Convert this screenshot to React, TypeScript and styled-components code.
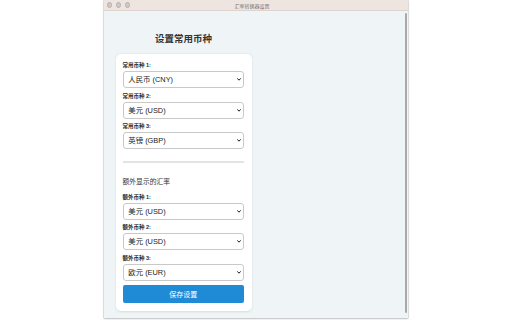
import React from "react";
import styled, { createGlobalStyle } from "styled-components";

const Global = createGlobalStyle`
  html, body { margin: 0; padding: 0; background: #ffffff; }
  body { font-family: "Liberation Sans", Arial, "Noto Sans CJK SC", sans-serif; }
  * { box-sizing: border-box; }
`;

const Page = styled.div`
  width: 512px;
  height: 320px;
  display: flex;
  padding-left: 104px;
  overflow: hidden;
`;

const Window = styled.div`
  width: 304px;
  height: 318px;
  display: flex;
  flex-direction: column;
  background: #eff4f7;
  box-shadow: 0 0 0 0.5px rgba(0, 0, 0, 0.18), 0 1px 2px rgba(0, 0, 0, 0.18);
`;

const TitleBar = styled.div`
  height: 11px;
  flex: none;
  display: flex;
  align-items: center;
  position: relative;
  padding-left: 2.5px;
  background: #eee4e0;
  border-bottom: 0.5px solid #ddd3cf;
`;

const Lights = styled.div`
  display: flex;
  gap: 3.5px;
`;

const Light = styled.span`
  width: 5.5px;
  height: 5.5px;
  border-radius: 50%;
  background: #cdc8c5;
  border: 0.5px solid #b9b3b0;
`;

const WindowTitle = styled.div`
  position: absolute;
  left: 0;
  right: 8px;
  top: 0;
  bottom: 0;
  display: flex;
  align-items: center;
  justify-content: center;
  font-size: 5px;
  color: #7a7472;
  pointer-events: none;
`;

const Content = styled.div`
  flex: 1;
  display: flex;
  min-height: 0;
`;

const Main = styled.div`
  flex: 1;
  padding: 22px 0 0 11.5px;
`;

const ScrollTrack = styled.div`
  width: 1.5px;
  margin: 2px 1.5px 5px 0;
  background: #a9a9a9;
  border-radius: 1px;
`;

const Column = styled.div`
  width: 136px;
  display: flex;
  flex-direction: column;
`;

const Heading = styled.h1`
  margin: 0;
  font-size: 9.5px;
  line-height: 12px;
  font-weight: 700;
  color: #333;
  text-align: center;
`;

const Card = styled.div`
  margin-top: 8.5px;
  background: #ffffff;
  border-radius: 5px;
  box-shadow: 0 0.5px 2.5px rgba(0, 0, 0, 0.1);
  padding: 8.5px 7.5px 8.5px 7px;
  display: flex;
  flex-direction: column;
`;

const Field = styled.div`
  display: flex;
  flex-direction: column;
  margin-bottom: 4.5px;
`;

const Label = styled.label`
  font-size: 5.5px;
  line-height: 6px;
  font-weight: 700;
  color: #2a2a2a;
  margin-bottom: 3px;
`;

const SelectWrap = styled.div`
  position: relative;
  height: 17px;
  font-size: 0;
  line-height: 0;
`;

const Select = styled.select`
  appearance: none;
  -webkit-appearance: none;
  display: block;
  width: 100%;
  height: 17px;
  margin: 0;
  padding: 0 10px 0 4.8px;
  font-family: "Liberation Sans", Arial, "Noto Sans CJK SC", sans-serif;
  font-size: 7.4px;
  line-height: normal;
  color: #222;
  background: #ffffff;
  border: 0.7px solid #c9c9c9;
  border-radius: 3px;
  outline: none;
`;

const Chevron = styled.svg`
  position: absolute;
  right: 3px;
  top: 7px;
  width: 4px;
  height: 3px;
  pointer-events: none;
`;

const Divider = styled.hr`
  margin: 7.5px 0 14.5px;
  border: none;
  height: 1.5px;
  background: #e3e3e3;
`;

const SubHeading = styled.h2`
  margin: 0 0 7.5px;
  font-size: 6.8px;
  line-height: 9px;
  font-weight: 400;
  color: #333;
`;

const SaveButton = styled.button`
  height: 18px;
  margin-top: -0.5px;
  border: none;
  border-radius: 2px;
  background: #1f8ad6;
  color: #ffffff;
  font-family: "Liberation Sans", Arial, "Noto Sans CJK SC", sans-serif;
  font-size: 7px;
  cursor: pointer;
`;

const options = [
  "人民币 (CNY)",
  "美元 (USD)",
  "英镑 (GBP)",
  "欧元 (EUR)",
  "日元 (JPY)",
  "港币 (HKD)",
];

function CurrencyField({ label, value }: { label: string; value: string }) {
  return (
    <Field>
      <Label>{label}</Label>
      <SelectWrap>
        <Select defaultValue={value}>
          {options.map((o) => (
            <option key={o} value={o}>
              {o}
            </option>
          ))}
        </Select>
        <Chevron viewBox="0 0 8 6">
          <path d="M1 1.2 L4 4.4 L7 1.2" fill="none" stroke="#1a1a1a" strokeWidth="2" strokeLinecap="round" strokeLinejoin="round" />
        </Chevron>
      </SelectWrap>
    </Field>
  );
}

export default function App() {
  return (
    <>
      <Global />
      <Page>
        <Window>
          <TitleBar>
            <Lights>
              <Light />
              <Light />
              <Light />
            </Lights>
            <WindowTitle>汇率转换器设置</WindowTitle>
          </TitleBar>
          <Content>
            <Main>
              <Column>
                <Heading>设置常用币种</Heading>
                <Card>
                  <CurrencyField label="常用币种 1:" value="人民币 (CNY)" />
                  <CurrencyField label="常用币种 2:" value="美元 (USD)" />
                  <CurrencyField label="常用币种 3:" value="英镑 (GBP)" />
                  <Divider />
                  <SubHeading>额外显示的汇率</SubHeading>
                  <CurrencyField label="额外币种 1:" value="美元 (USD)" />
                  <CurrencyField label="额外币种 2:" value="美元 (USD)" />
                  <CurrencyField label="额外币种 3:" value="欧元 (EUR)" />
                  <SaveButton>保存设置</SaveButton>
                </Card>
              </Column>
            </Main>
            <ScrollTrack />
          </Content>
        </Window>
      </Page>
    </>
  );
}
